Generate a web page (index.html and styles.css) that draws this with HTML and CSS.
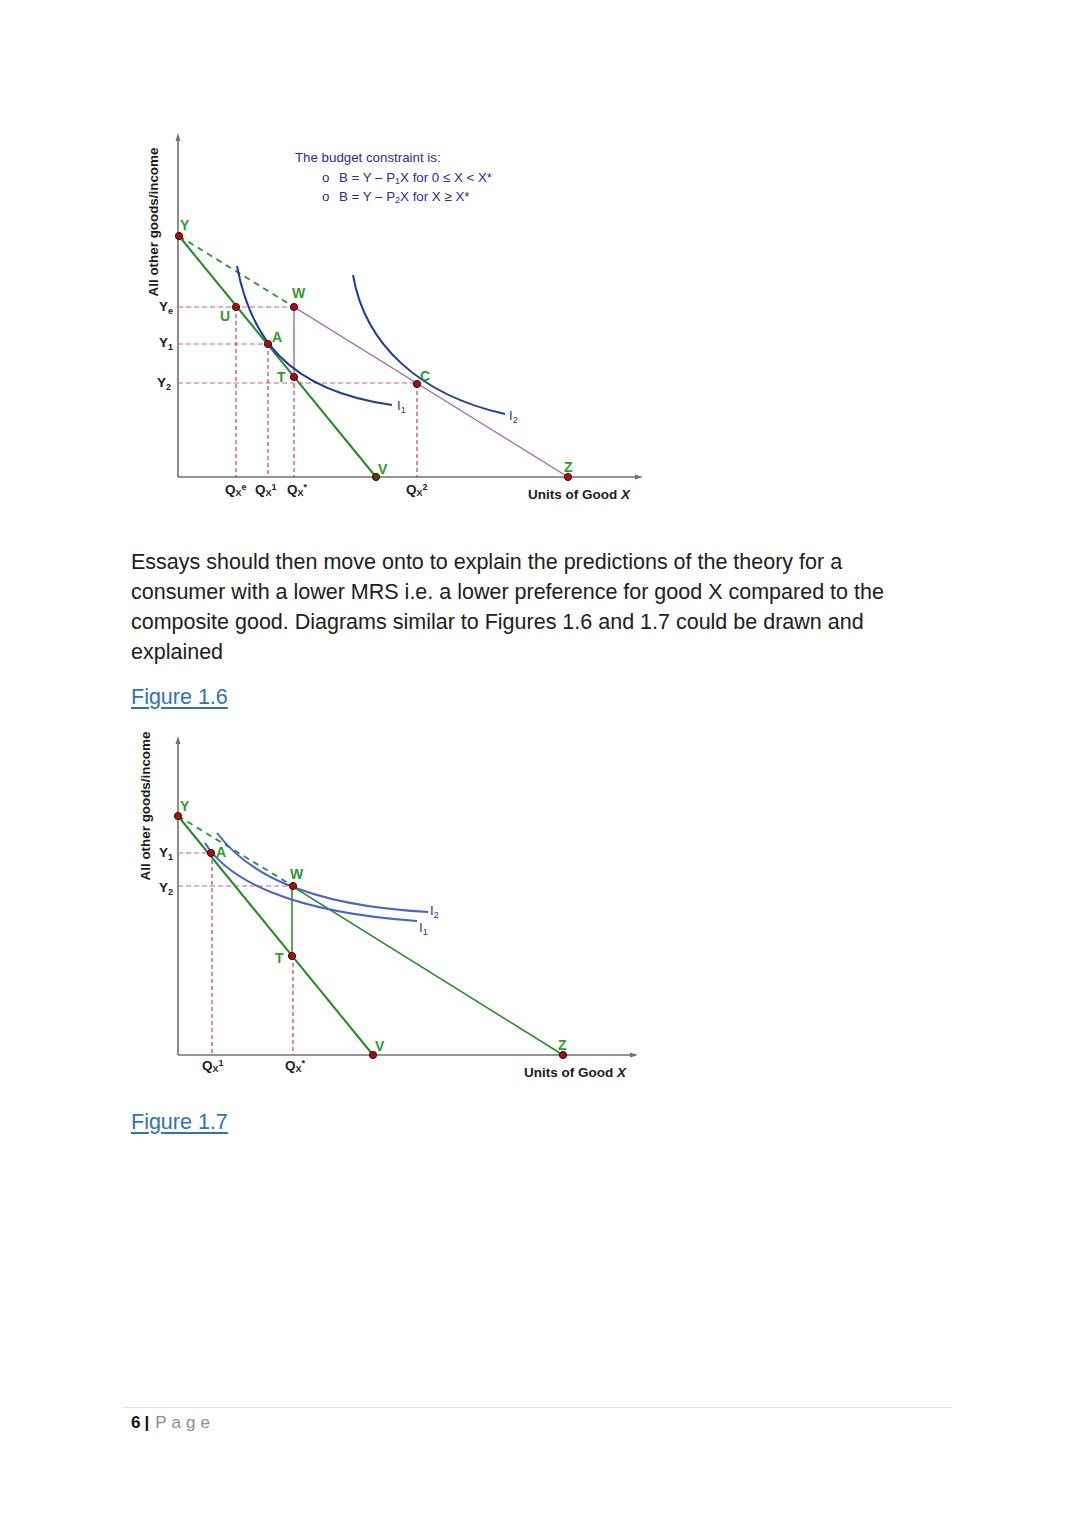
FILE: index.html
```html
<!DOCTYPE html>
<html lang="en">
<head>
<meta charset="utf-8">
<title>Page 6</title>
<link rel="stylesheet" href="styles.css">
</head>
<body>
<main class="page">
  <figure class="chart chart-one">
    <svg viewBox="140 130 520 385" width="520" height="385" xmlns="http://www.w3.org/2000/svg">
      <!-- axes -->
      <line class="axis" x1="178" y1="139" x2="178" y2="477"/>
      <polygon class="axis-head" points="178,133 175.5,141 180.5,141"/>
      <line class="axis" x1="178" y1="477" x2="637" y2="477"/>
      <polygon class="axis-head" points="643,477 635,474.5 635,479.5"/>
      <text class="axis-title" transform="translate(158,222) rotate(-90)" text-anchor="middle">All other goods/income</text>

      <!-- guide lines -->
      <line class="guide-h" x1="178" y1="307" x2="294" y2="307"/>
      <line class="guide-h" x1="178" y1="344" x2="268" y2="344"/>
      <line class="guide-h" x1="178" y1="383" x2="417" y2="383"/>
      <line class="guide-v" x1="236" y1="307" x2="236" y2="477"/>
      <line class="guide-v" x1="268" y1="344" x2="268" y2="477"/>
      <line class="guide-v" x1="294" y1="377" x2="294" y2="477"/>
      <line class="guide-v" x1="417" y1="384" x2="417" y2="477"/>

      <!-- budget lines -->
      <line class="green-dash" x1="179" y1="236" x2="294" y2="307"/>
      <line class="green" x1="179" y1="236" x2="376" y2="477"/>
      <polyline class="purple" points="294,377 294,307 568,477"/>

      <!-- indifference curves -->
      <path class="curve dark" d="M237,266 C250,335 285,390 392,405"/>
      <path class="curve dark" d="M353,275 C365,345 420,395 505,414"/>

      <!-- points -->
      <circle class="pt" cx="179" cy="236" r="3.6"/>
      <circle class="pt" cx="236" cy="307" r="3.6"/>
      <circle class="pt" cx="294" cy="307" r="3.6"/>
      <circle class="pt" cx="268" cy="344" r="3.6"/>
      <circle class="pt" cx="294" cy="377" r="3.6"/>
      <circle class="pt" cx="417" cy="384" r="3.6"/>
      <circle class="pt olive" cx="376" cy="477" r="3.6"/>
      <circle class="pt" cx="568" cy="477" r="3.6"/>

      <!-- point labels -->
      <text class="lbl" x="180" y="230">Y</text>
      <text class="lbl" x="220" y="321">U</text>
      <text class="lbl" x="292" y="298">W</text>
      <text class="lbl" x="272" y="342">A</text>
      <text class="lbl" x="277" y="382">T</text>
      <text class="lbl" x="420" y="381">C</text>
      <text class="lbl" x="378" y="474">V</text>
      <text class="lbl" x="564" y="472">Z</text>

      <!-- axis values -->
      <text class="val" x="159" y="311">Y<tspan class="sub" dy="3">e</tspan></text>
      <text class="val" x="159" y="347">Y<tspan class="sub" dy="3">1</tspan></text>
      <text class="val" x="157" y="387">Y<tspan class="sub" dy="3">2</tspan></text>
      <text class="val" x="225" y="494">Q<tspan class="sub" dy="2">X</tspan><tspan class="sup" dy="-6">e</tspan></text>
      <text class="val" x="255" y="494">Q<tspan class="sub" dy="2">X</tspan><tspan class="sup" dy="-6">1</tspan></text>
      <text class="val" x="287" y="494">Q<tspan class="sub" dy="2">X</tspan><tspan class="sup" dy="-6">*</tspan></text>
      <text class="val" x="406" y="494">Q<tspan class="sub" dy="2">X</tspan><tspan class="sup" dy="-6">2</tspan></text>
      <text class="val" x="528" y="499">Units of Good <tspan class="ital">X</tspan></text>

      <text class="ic" x="397" y="410">I<tspan class="sub" dy="3">1</tspan></text>
      <text class="ic" x="509" y="420">I<tspan class="sub" dy="3">2</tspan></text>

      <!-- budget constraint note -->
      <text class="note" x="295" y="162">The budget constraint is:</text>
      <text class="note" x="322" y="182">o</text>
      <text class="note" x="339" y="182">B = Y – P<tspan class="sub" dy="2">1</tspan><tspan dy="-2">X for 0 ≤ X &lt; X*</tspan></text>
      <text class="note" x="322" y="201">o</text>
      <text class="note" x="339" y="201">B = Y – P<tspan class="sub" dy="2">2</tspan><tspan dy="-2">X for X ≥ X*</tspan></text>
    </svg>
  </figure>

  <p class="body-text">Essays should then move onto to explain the predictions of the theory for a consumer with a lower MRS i.e. a lower preference for good X compared to the composite good. Diagrams similar to Figures 1.6 and 1.7 could be drawn and explained</p>

  <p class="fig-link"><a href="#fig16">Figure 1.6</a></p>

  <figure class="chart chart-two" id="fig16">
    <svg viewBox="130 725 520 365" width="520" height="365" xmlns="http://www.w3.org/2000/svg">
      <line class="axis" x1="178" y1="742" x2="178" y2="1055"/>
      <polygon class="axis-head" points="178,736 175.5,744 180.5,744"/>
      <line class="axis" x1="178" y1="1055" x2="632" y2="1055"/>
      <polygon class="axis-head" points="638,1055 630,1052.5 630,1057.5"/>
      <text class="axis-title" transform="translate(150,806) rotate(-90)" text-anchor="middle">All other goods/income</text>

      <line class="guide-h" x1="178" y1="853" x2="211" y2="853"/>
      <line class="guide-h" x1="178" y1="886" x2="293" y2="886"/>
      <line class="guide-v" x1="212" y1="853" x2="212" y2="1055"/>
      <line class="guide-v" x1="293" y1="956" x2="293" y2="1055"/>

      <line class="green-dash" x1="178" y1="816" x2="293" y2="886"/>
      <line class="green" x1="178" y1="816" x2="373" y2="1055"/>
      <polyline class="green thin" points="292,956 292,886 563,1055"/>

      <path class="curve light" d="M217,833 C245,870 300,905 428,912"/>
      <path class="curve light" d="M205,843 C228,880 290,912 417,921"/>

      <circle class="pt" cx="178" cy="816" r="3.6"/>
      <circle class="pt" cx="211" cy="853" r="3.6"/>
      <circle class="pt" cx="293" cy="886" r="3.6"/>
      <circle class="pt" cx="292" cy="956" r="3.6"/>
      <circle class="pt" cx="373" cy="1055" r="3.6"/>
      <circle class="pt" cx="563" cy="1055" r="3.6"/>

      <text class="lbl" x="180" y="811">Y</text>
      <text class="lbl" x="216" y="857">A</text>
      <text class="lbl" x="290" y="879">W</text>
      <text class="lbl" x="275" y="963">T</text>
      <text class="lbl" x="375" y="1051">V</text>
      <text class="lbl" x="558" y="1050">Z</text>

      <text class="val" x="159" y="857">Y<tspan class="sub" dy="3">1</tspan></text>
      <text class="val" x="159" y="892">Y<tspan class="sub" dy="3">2</tspan></text>
      <text class="val" x="202" y="1070">Q<tspan class="sub" dy="2">X</tspan><tspan class="sup" dy="-6">1</tspan></text>
      <text class="val" x="285" y="1070">Q<tspan class="sub" dy="2">X</tspan><tspan class="sup" dy="-6">*</tspan></text>
      <text class="val" x="524" y="1077">Units of Good <tspan class="ital">X</tspan></text>

      <text class="ic" x="430" y="915">I<tspan class="sub" dy="3">2</tspan></text>
      <text class="ic" x="419" y="932">I<tspan class="sub" dy="3">1</tspan></text>
    </svg>
  </figure>

  <p class="fig-link fig-last"><a href="#fig17">Figure 1.7</a></p>

  <footer class="page-foot" id="fig17">
    <span class="page-num">6</span><span class="page-bar">|</span><span class="page-word">Page</span>
  </footer>
</main>
</body>
</html>
```

FILE: styles.css
```css
html, body {
  margin: 0;
  padding: 0;
  background: #ffffff;
}

body {
  font-family: "Liberation Sans", Arial, sans-serif;
  color: #222222;
  width: 1080px;
  min-height: 1520px;
}

.page {
  padding-top: 130px;
}

.chart {
  margin: 0;
  display: block;
}

.chart svg {
  display: block;
}

.chart-one {
  margin-left: 140px;
}

.chart-two {
  margin-left: 130px;
  margin-top: 13px;
}

.body-text {
  margin: 32px 0 0 131px;
  width: 790px;
  font-size: 21.5px;
  line-height: 30px;
  color: #202020;
}

.fig-link {
  margin: 15px 0 0 131px;
  font-size: 21.5px;
  line-height: 30px;
}

.fig-link a {
  color: #2f72b8;
  text-decoration: underline;
  text-underline-offset: 3px;
  text-decoration-thickness: 1.5px;
}

.fig-last {
  margin-top: 17px;
}

.page-foot {
  margin: 270px 128px 0 122px;
  border-top: 1px solid #e6e6e6;
  padding: 5px 0 0 9px;
  font-size: 17px;
  line-height: 20px;
}

.page-num {
  font-weight: bold;
  color: #111111;
}

.page-bar {
  font-weight: bold;
  color: #111111;
  margin: 0 6px 0 4px;
}

.page-word {
  color: #8c8c8c;
  letter-spacing: 5px;
}

/* SVG diagram styles */
.axis {
  stroke: #707070;
  stroke-width: 1.6;
}

.axis-head {
  fill: #707070;
}

.axis-title {
  font: bold 13.4px "Liberation Sans", Arial, sans-serif;
  fill: #1c1c1c;
}

.guide-h {
  stroke: #d45c8e;
  stroke-width: 1.2;
  stroke-dasharray: 5 3;
}

.guide-v {
  stroke: #c8283c;
  stroke-width: 1.1;
  stroke-dasharray: 4 3;
}

.green {
  stroke: #238a23;
  stroke-width: 2;
  fill: none;
}

.green.thin {
  stroke-width: 1.5;
}

.green-dash {
  stroke: #2f8f2f;
  stroke-width: 1.8;
  stroke-dasharray: 6 5;
}

.purple {
  stroke: #9c6ac6;
  stroke-width: 1.4;
  fill: none;
}

.curve {
  fill: none;
  stroke-width: 2;
}

.curve.dark {
  stroke: #1f3aa6;
}

.curve.light {
  stroke: #4a63cc;
  stroke-width: 2;
}

.pt {
  fill: #a81010;
  stroke: #3a0a0a;
  stroke-width: 1;
}

.pt.olive {
  fill: #5a3a10;
}

.lbl {
  font: bold 14px "Liberation Sans", Arial, sans-serif;
  fill: #2f9a2f;
}

.val {
  font: bold 13.5px "Liberation Sans", Arial, sans-serif;
  fill: #1c1c1c;
}

.sub,
.sup {
  font-size: 9px;
}

.ital {
  font-style: italic;
}

.ic {
  font: 13px "Liberation Sans", Arial, sans-serif;
  fill: #2a2e9e;
}

.note {
  font: 13.3px "Liberation Sans", Arial, sans-serif;
  fill: #2a2aa6;
}
```
